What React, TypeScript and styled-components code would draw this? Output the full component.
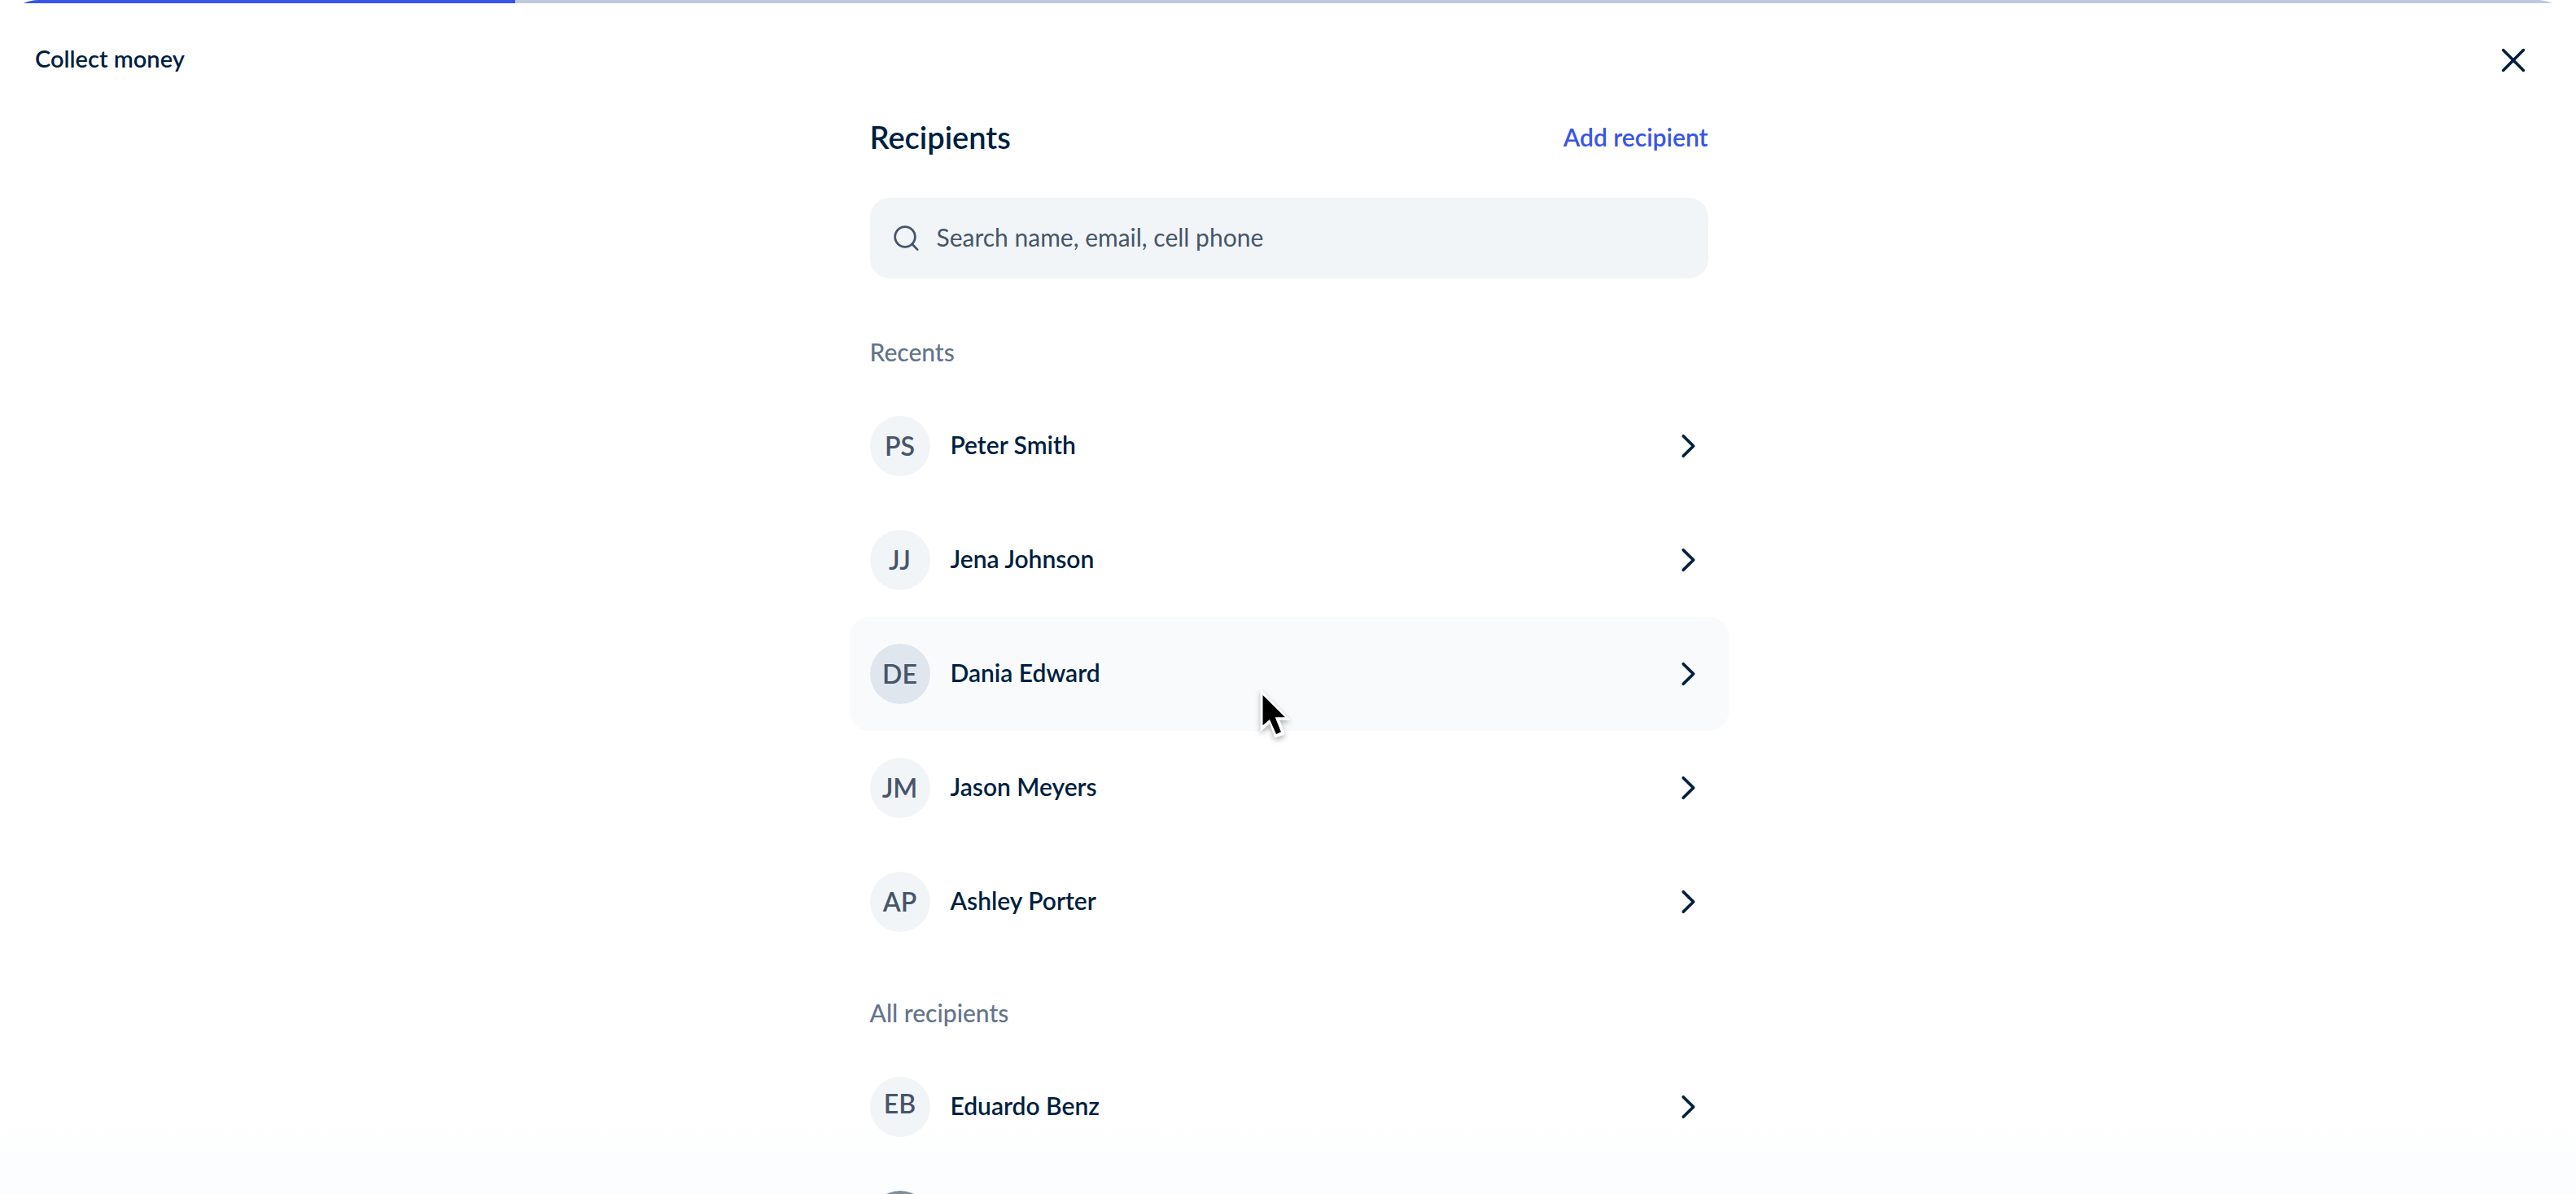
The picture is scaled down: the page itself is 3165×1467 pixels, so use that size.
import React from "react";
import styled, { createGlobalStyle } from "styled-components";

const color = {
  ink: "#001f3f",
  body: "#475569",
  muted: "#64748b",
  brand: "#3855e8",
  track: "#bccadc",
  field: "#f1f5f8",
  hover: "#f8fafc",
  avatarHover: "#dfe6ee",
};

const GlobalStyle = createGlobalStyle`
  * { box-sizing: border-box; }
  body { margin: 0; background: #fff; }
  button, input { font: inherit; color: inherit; border: 0; background: none; padding: 0; }
  button { cursor: pointer; }
`;

const Page = styled.div`
  position: relative;
  display: flex;
  flex-direction: column;
  height: 100vh;
  overflow: hidden;
  border-radius: 48px 48px 0 0;
  background: #fff;
  color: ${color.ink};
  font-family: Lato, "Liberation Sans", sans-serif;
  font-size: 30px;
  font-weight: 600;
  line-height: 44px;
`;

const Progress = styled.div`
  flex: none;
  height: 4px;
  background: ${color.track};
`;

const ProgressFill = styled.div`
  height: 100%;
  background: ${color.brand};
`;

const Header = styled.header`
  flex: none;
  display: flex;
  align-items: center;
  justify-content: space-between;
  height: 140px;
  padding: 0 53px 0 43px;
`;

const FlowTitle = styled.h1`
  margin: 0;
  padding-bottom: 4px;
  font-size: 29px;
  font-weight: 600;
`;

const CloseButton = styled.button`
  display: flex;
`;

const Scroller = styled.main`
  flex: 1;
  min-height: 0;
  padding-left: 2px;
  overflow-y: auto;
  scrollbar-width: none;
`;

const Column = styled.div`
  width: 100%;
  max-width: 1080px;
  margin: 0 auto;
`;

const TitleRow = styled.div`
  display: flex;
  align-items: center;
  justify-content: space-between;
  height: 48px;
  margin: 0 25px 51px;
`;

const Title = styled.h2`
  margin: 0;
  font-size: 38px;
  font-weight: 600;
`;

const AddLink = styled.a`
  color: ${color.brand};
  text-decoration: none;
`;

const SearchField = styled.label`
  display: flex;
  align-items: center;
  gap: 18px;
  height: 99px;
  margin: 0 25px 24px;
  padding: 0 24px;
  border-radius: 24px;
  background: ${color.field};
  color: ${color.body};
`;

const SearchInput = styled.input`
  flex: 1;
  min-width: 0;
  height: 48px;
  padding-bottom: 4px;
  font-weight: 400;
  outline: none;
  &::placeholder { color: ${color.body}; opacity: 1; }
`;

const SectionTitle = styled.h3`
  margin: 0;
  padding: 44px 25px 24px;
  color: ${color.muted};
  font-size: 30px;
  font-weight: 500;
`;

const List = styled.ul`
  margin: 0;
  padding: 0;
  list-style: none;
`;

const Item = styled.li`
  position: relative;
`;

const RowButton = styled.button<{ $active?: boolean }>`
  display: flex;
  align-items: center;
  gap: 25px;
  width: 100%;
  height: 140px;
  padding: 0 25px;
  border-radius: 24px;
  background: ${(p) => (p.$active ? color.hover : "transparent")};
  text-align: left;
`;

const Avatar = styled.span<{ $active?: boolean; $raised?: boolean; $photo?: boolean }>`
  flex: none;
  display: flex;
  align-items: center;
  justify-content: center;
  width: 74px;
  height: 74px;
  padding-bottom: ${(p) => (p.$raised ? 8 : 0)}px;
  border-radius: 50%;
  background: ${(p) => (p.$photo ? "#55636f" : p.$active ? color.avatarHover : color.field)};
  color: ${color.body};
  font-size: 32px;
`;

const Name = styled.span`
  flex: 1;
  padding-bottom: 4px;
`;

const Fade = styled.div`
  position: absolute;
  inset: auto 0 0;
  height: 100px;
  background: linear-gradient(rgba(240, 245, 250, 0), rgba(240, 245, 250, 0.3));
  pointer-events: none;
`;

const Pointer = styled.svg`
  position: absolute;
  left: 502px;
  top: 86px;
  overflow: visible;
  filter: drop-shadow(0 3px 3px rgba(0, 0, 0, 0.3));
  pointer-events: none;
`;

const CloseIcon = () => (
  <svg width="48" height="48" viewBox="0 0 48 48" fill="none" stroke="currentColor" strokeWidth="3.6" strokeLinecap="round" aria-hidden="true">
    <path d="M11.6 11.6 36.4 36.4M36.4 11.6 11.6 36.4" />
  </svg>
);

const SearchIcon = () => (
  <svg width="40" height="40" viewBox="0 0 40 40" fill="none" stroke="currentColor" strokeWidth="2.8" strokeLinecap="round" aria-hidden="true">
    <circle cx="19" cy="18" r="12.3" />
    <path d="M27.8 27 34.2 33.6" />
  </svg>
);

const ChevronIcon = () => (
  <svg width="48" height="48" viewBox="0 0 48 48" fill="none" stroke="currentColor" strokeWidth="3.7" strokeLinecap="round" strokeLinejoin="round" aria-hidden="true">
    <path d="M17.2 11.7 29.6 24 17.2 36.3" />
  </svg>
);

const PointerIcon = () => (
  <Pointer width="42" height="66" viewBox="0 0 42 66" aria-hidden="true">
    <path fill="#fff" d="M2.6 2 39.2 40.7H26.2L33 58.3 20.3 62.7 14 45 2.6 55.3Z" />
    <path fill="#000" d="M5.5 10 33 37.3H20.7L27.9 55.3 22 58 14 40 5.5 47.3Z" />
  </Pointer>
);

type Recipient = { name: string; initials?: string; active?: boolean; raised?: boolean };

const recents: Recipient[] = [
  { name: "Peter Smith", initials: "PS" },
  { name: "Jena Johnson", initials: "JJ" },
  { name: "Dania Edward", initials: "DE", active: true },
  { name: "Jason Meyers", initials: "JM" },
  { name: "Ashley Porter", initials: "AP" },
];

const everyone: Recipient[] = [{ name: "Eduardo Benz", initials: "EB", raised: true }, { name: "" }];

const RecipientList = ({ items }: { items: Recipient[] }) => (
  <List>
    {items.map((r, i) => (
      <Item key={i}>
        <RowButton type="button" $active={r.active}>
          <Avatar $active={r.active} $raised={r.raised} $photo={!r.initials}>
            {r.initials}
          </Avatar>
          <Name>{r.name}</Name>
          <ChevronIcon />
        </RowButton>
        {r.active && <PointerIcon />}
      </Item>
    ))}
  </List>
);

export default function App() {
  const progress = 20;
  return (
    <Page>
      <GlobalStyle />
      <Progress>
        <ProgressFill style={{ width: `${progress}%` }} />
      </Progress>
      <Header>
        <FlowTitle>Collect money</FlowTitle>
        <CloseButton type="button" aria-label="Close">
          <CloseIcon />
        </CloseButton>
      </Header>
      <Scroller>
        <Column>
          <TitleRow>
            <Title>Recipients</Title>
            <AddLink href="#add">Add recipient</AddLink>
          </TitleRow>
          <SearchField>
            <SearchIcon />
            <SearchInput type="text" aria-label="Search recipients" placeholder="Search name, email, cell phone" />
          </SearchField>
          <SectionTitle>Recents</SectionTitle>
          <RecipientList items={recents} />
          <SectionTitle>All recipients</SectionTitle>
          <RecipientList items={everyone} />
        </Column>
      </Scroller>
      <Fade />
    </Page>
  );
}
